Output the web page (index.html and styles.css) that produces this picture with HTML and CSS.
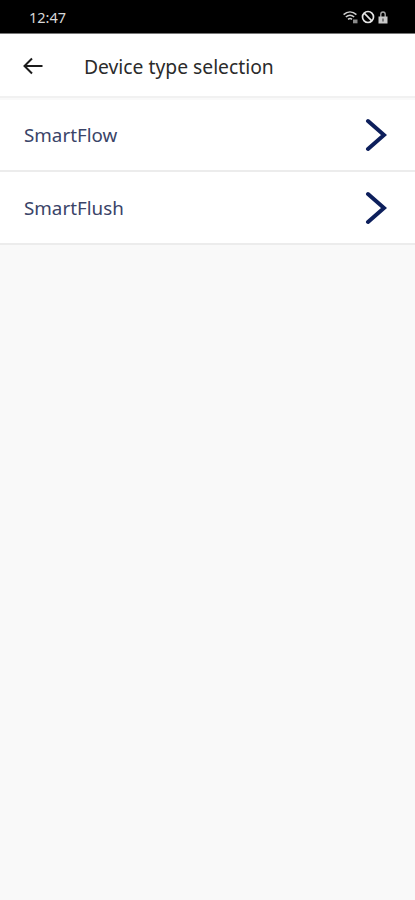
FILE: index.html
```html
<!DOCTYPE html>
<html lang="en">
<head>
<meta charset="utf-8">
<title>Device type selection</title>
<link rel="stylesheet" href="styles.css">
</head>
<body>
<div class="status">
  <span class="time">12:47</span>
  <div class="status-icons">
    <svg class="wifi" width="15" height="14" viewBox="0 0 15 14"><path d="M.6 4.600C4.500 1 9.500 1 13.400 4.600M2.800 7c2.900-2.400 5.500-2.400 8.400 0M5 9.400c1.600-1.200 2.600-1.200 4 0" fill="none" stroke="#cfcfcf" stroke-width="1.500"/><rect x="10" y="9.500" width="4.500" height="3.800" fill="#8a8a8a"/></svg>
    <svg class="ban" width="14" height="14" viewBox="0 0 14 14"><circle cx="7" cy="7" r="5.500" fill="none" stroke="#e4e4e4" stroke-width="1.700"/><path d="M3.200 3.200l7.600 7.600" stroke="#e4e4e4" stroke-width="1.700"/></svg>
    <svg class="lock" width="10" height="14" viewBox="0 0 10 14"><path d="M2.800 7V4.200a2.200 2.200 0 0 1 4.400 0V7" fill="none" stroke="#a5a5a5" stroke-width="1.400"/><rect x=".5" y="6.500" width="9" height="7" fill="#c9c9c9"/><rect x="4" y="8.500" width="2" height="3" fill="#777"/></svg>
  </div>
</div>
<header class="appbar">
  <svg class="back" width="22" height="20" viewBox="0 0 22 20"><path d="M20.500 10H2.500M10 2.500L2.500 10l7.500 7.500" fill="none" stroke="#1c1c1c" stroke-width="2"/></svg>
  <h1 class="title">Device type selection</h1>
</header>
<main class="list">
  <a class="row"><span class="label">SmartFlow</span><svg class="chev" width="24" height="36" viewBox="0 0 24 36"><path d="M5 4l16 14L5 32" fill="none" stroke="#0d1f5c" stroke-width="4" stroke-linecap="round"/></svg></a>
  <a class="row"><span class="label">SmartFlush</span><svg class="chev" width="24" height="36" viewBox="0 0 24 36"><path d="M5 4l16 14L5 32" fill="none" stroke="#0d1f5c" stroke-width="4" stroke-linecap="round"/></svg></a>
</main>
</body>
</html>
```
FILE: styles.css
```css
* { box-sizing: border-box; }
html, body { margin: 0; height: 100%; }
body { background: #f9f9f9; font-family: "Noto Sans", "Open Sans", sans-serif; width: 415px; height: 900px; overflow: hidden; }
.status { height: 34px; background: #000; border-bottom: 1px solid #777; display: flex; align-items: center; justify-content: space-between; padding: 0 27px 0 29px; color: #d8d8d8; }
.time { font-size: 14.5px; }
.status-icons { display: flex; align-items: center; gap: 3px; }
.appbar { height: 64px; background: #fff; display: flex; align-items: center; padding: 2px 0 0 22px; border-bottom: 2px solid #f1f1f1; }
.back { flex: none; }
.title { margin: 0 0 0 40px; font-size: 19.3px; font-weight: 400; color: #2b2b2b; }
.list { padding-top: 2px; }
.row { height: 73px; background: #fff; display: flex; align-items: center; justify-content: space-between; padding: 0 28px 0 24px; border-bottom: 2px solid #ececec; }
.row:first-child { height: 72px; }
.label { font-size: 18.8px; color: #3a4468; }
.chev { flex: none; }
```
